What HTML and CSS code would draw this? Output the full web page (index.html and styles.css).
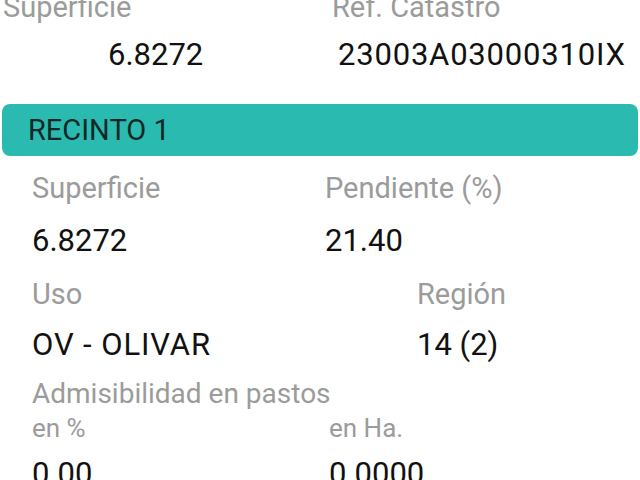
FILE: index.html
```html
<!DOCTYPE html>
<html lang="es">
<head>
<meta charset="utf-8">
<title>Recinto</title>
<link rel="stylesheet" href="styles.css">
</head>
<body>
<div class="page">
  <div class="parcela">
    <div class="pcol pcol-1">
      <div class="label">Superficie</div>
      <div class="value pval-1">6.8272</div>
    </div>
    <div class="pcol pcol-2">
      <div class="label">Ref. Catastro</div>
      <div class="value pval-2">23003A03000310IX</div>
    </div>
  </div>

  <div class="bar">RECINTO 1</div>

  <div class="recinto">
    <div class="row row-a">
      <div class="field">
        <div class="label">Superficie</div>
        <div class="value">6.8272</div>
      </div>
      <div class="field">
        <div class="label">Pendiente (%)</div>
        <div class="value">21.40</div>
      </div>
    </div>
    <div class="row row-b">
      <div class="field">
        <div class="label">Uso</div>
        <div class="value wide">OV - OLIVAR</div>
      </div>
      <div class="field">
        <div class="label">Región</div>
        <div class="value">14 (2)</div>
      </div>
    </div>
    <div class="group">
      <div class="label narrow">Admisibilidad en pastos</div>
      <div class="row row-c">
        <div class="field">
          <div class="sublabel">en %</div>
          <div class="value">0.00</div>
        </div>
        <div class="field">
          <div class="sublabel">en Ha.</div>
          <div class="value">0.0000</div>
        </div>
      </div>
    </div>
  </div>
</div>
</body>
</html>
```

FILE: styles.css
```css
html, body {
  margin: 0;
  padding: 0;
  background: #ffffff;
}

body {
  font-family: Roboto, "Liberation Sans", Arial, sans-serif;
  color: #111111;
  overflow: hidden;
  width: 640px;
  height: 480px;
}

.page {
  margin-top: -10px;
}

.label {
  font-size: 29px;
  line-height: 34px;
  color: #9b9b9b;
}

.label.narrow {
  font-size: 28px;
}

.sublabel {
  font-size: 26px;
  line-height: 30px;
  color: #9b9b9b;
}

.value {
  font-size: 31px;
  line-height: 36px;
  color: #111111;
}

.value.wide {
  letter-spacing: 0.9px;
}

/* Parcela (top) */
.parcela {
  display: grid;
  grid-template-columns: 332px 1fr;
}

.pcol-1 {
  padding-left: 3px;
}

.pcol .value {
  margin-top: 13px;
}

.pval-1 {
  padding-left: 105px;
}

.pval-2 {
  padding-left: 6px;
  letter-spacing: 0.8px;
}

/* Teal header */
.bar {
  margin: 31px 2px 0 2px;
  height: 52px;
  border-radius: 8px;
  background: #2bbab0;
  color: #102826;
  font-size: 29px;
  line-height: 52px;
  padding-left: 26px;
  box-sizing: border-box;
}

/* Recinto fields */
.recinto {
  padding: 15px 0 0 32px;
}

.row {
  display: grid;
}

.row-a {
  grid-template-columns: 293px 1fr;
}

.row-b {
  grid-template-columns: 385px 1fr;
  margin-top: 18px;
}

.row-c {
  grid-template-columns: 297px 1fr;
  margin-top: 2px;
}

.field .value {
  margin-top: 18px;
}

.row-b .field .value {
  margin-top: 16px;
}

.row-c .field .value {
  margin-top: 13px;
}

.group {
  margin-top: 14px;
}
```
